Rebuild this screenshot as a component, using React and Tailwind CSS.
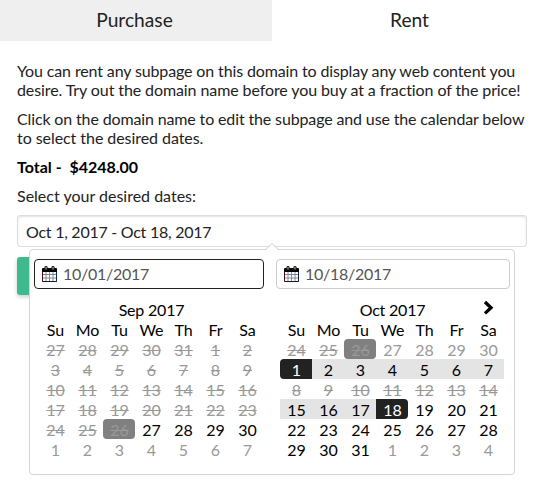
const WEEKDAYS = ['Su', 'Mo', 'Tu', 'We', 'Th', 'Fr', 'Sa'];

// Day kinds: x = struck out, t = today (struck out), o = other month,
// n = selectable, r = in range, s = range start, e = range end
const KINDS = {
  x: 'text-[#999] line-through',
  t: 'text-[#999] line-through bg-[#808080] rounded-[4px]',
  o: 'text-[#999]',
  n: 'text-black',
  r: 'text-black bg-[#e4e4e4]',
  s: 'text-white bg-[#222] rounded-l-[4px]',
  e: 'text-white bg-[#222] rounded-r-[4px]',
};

const MONTHS = [
  {
    title: 'Sep 2017',
    first: 27,
    previousLength: 31,
    length: 30,
    kinds: 'xxxxxxxxxxxxxxxxxxxxxxxxxxxxxxtnnnnooooooo',
  },
  {
    title: 'Oct 2017',
    first: 24,
    previousLength: 30,
    length: 31,
    kinds: 'xxtoooosrrrrrrxxxxxxxrrrennnnnnnnnnnnnoooo',
  },
];

function dayNumber(month, index) {
  const lead = month.previousLength - month.first + 1;
  if (index < lead) return month.first + index;
  const day = index - lead + 1;
  return day > month.length ? day - month.length : day;
}

function CalendarIcon() {
  return (
    <svg className="h-[16px] w-[15px] shrink-0" viewBox="0 0 15 16">
      <path d="M0.500 5h14v10.500h-14z" fill="#fff" stroke="#1a1a1a" />
      <path d="M0.500 5v10.500" stroke="#4a0a18" />
      <path d="M14.500 5v10.500" stroke="#0a2a5a" />
      <path d="M1 8.500h13M1 12h13" stroke="#777" strokeWidth="0.900" />
      <path d="M4 6v9M11 6v9" stroke="#6a86a0" strokeWidth="0.900" />
      <path d="M7.500 6v9" stroke="#a07868" strokeWidth="0.900" />
      <path d="M0 6V3a1 1 0 0 1 1-1h13a1 1 0 0 1 1 1v3z" fill="#050505" />
      <rect x="2.500" y="0" width="3" height="4" rx="1.200" fill="#222" />
      <rect x="9.500" y="0" width="3" height="4" rx="1.200" fill="#222" />
      <path d="M4 1v2.500M11 1v2.500" stroke="#b8a888" strokeWidth="1" />
    </svg>
  );
}

function DateField({ value, active }) {
  return (
    <div
      className={
        'flex h-[30px] items-center rounded-[4px] border pl-[7px] text-[#555] ' +
        (active ? 'w-[230px] border-[#222]' : 'w-[234px] border-[#ccc]')
      }
    >
      <CalendarIcon />
      <span className="ml-[6px] leading-[20px] tracking-[-0.280px]">{value}</span>
    </div>
  );
}

function Month({ month, next }) {
  return (
    <div className="grid grid-cols-[repeat(7,32px)] auto-rows-[20px] text-center leading-[22px] text-black">
      <div className="relative col-span-7 pl-px tracking-[-0.200px]">
        {month.title}
        {next && (
          <svg className="absolute top-[1px] right-[9px] h-[16px] w-[13px]" viewBox="0 0 13 16">
            <path d="M3 2l6 5.700-6 5.700" fill="none" stroke="#000" strokeWidth="3.300" />
          </svg>
        )}
      </div>
      {WEEKDAYS.map((day) => (
        <div key={day} className="pl-px">{day}</div>
      ))}
      {month.kinds.split('').map((kind, index) => (
        <div key={index} className={'pl-px ' + KINDS[kind]}>
          {dayNumber(month, index)}
        </div>
      ))}
    </div>
  );
}

export default function App() {
  return (
    <div className="h-[501px] w-[544px] overflow-hidden bg-white font-['Lato',sans-serif] text-[16px] leading-[19px] text-[#222]">
      <div className="flex h-[41px] text-center text-[19.2px] leading-[39px]">
        <div className="w-[272px] bg-[#efefef] pr-[3px]">Purchase</div>
        <div className="w-[272px] pl-[3px]">Rent</div>
      </div>
      <div className="px-[17px] pt-[20px]">
        <p className="mb-[10px] whitespace-nowrap">
          <span className="tracking-[-0.132px]">
            You can rent any subpage on this domain to display any web content you
          </span>
          <br />
          <span className="tracking-[-0.095px]">
            desire. Try out the domain name before you buy at a fraction of the price!
          </span>
        </p>
        <p className="mb-[10px] whitespace-nowrap">
          <span className="tracking-[-0.138px]">
            Click on the domain name to edit the subpage and use the calendar below
          </span>
          <br />
          <span className="tracking-[-0.060px]">to select the desired dates.</span>
        </p>
        <p className="mb-[10px] font-bold whitespace-pre text-black">{'Total -  $4248.00'}</p>
        <p>Select your desired dates:</p>
        <div className="relative mt-[10px]">
          <div className="flex h-[32px] w-[510px] items-center rounded-[3px] border border-[#ddd] pl-[8px] tracking-[-0.260px] shadow-[inset_0_1px_2px_rgba(0,0,0,0.12)]">
            Oct 1, 2017 - Oct 18, 2017
          </div>
          <div className="mt-[10px] h-[38px] w-[120px] rounded-[3px] bg-[#3dbb8f] shadow-[0_2px_4px_rgba(0,0,0,0.2)]" />
          <div className="absolute top-[34px] left-[12px] h-[226px] w-[486px] rounded-[4px] border border-[#d4d4d4] bg-white px-[4px] pt-[9px]">
            <svg className="absolute -top-[7px] left-[235px] h-[8px] w-[14px]" viewBox="0 0 14 8">
              <path d="M0 7.500L7 1l7 6.500V8H0z" fill="#fff" />
              <path d="M0 7L7 .7 14 7" fill="none" stroke="#d0d0d0" />
            </svg>
            <div className="flex gap-[12px]">
              <DateField value="10/01/2017" active />
              <DateField value="10/18/2017" />
            </div>
            <div className="mt-[10px] flex gap-[17px] pl-[5px]">
              <Month month={MONTHS[0]} />
              <Month month={MONTHS[1]} next />
            </div>
          </div>
        </div>
      </div>
    </div>
  );
}
